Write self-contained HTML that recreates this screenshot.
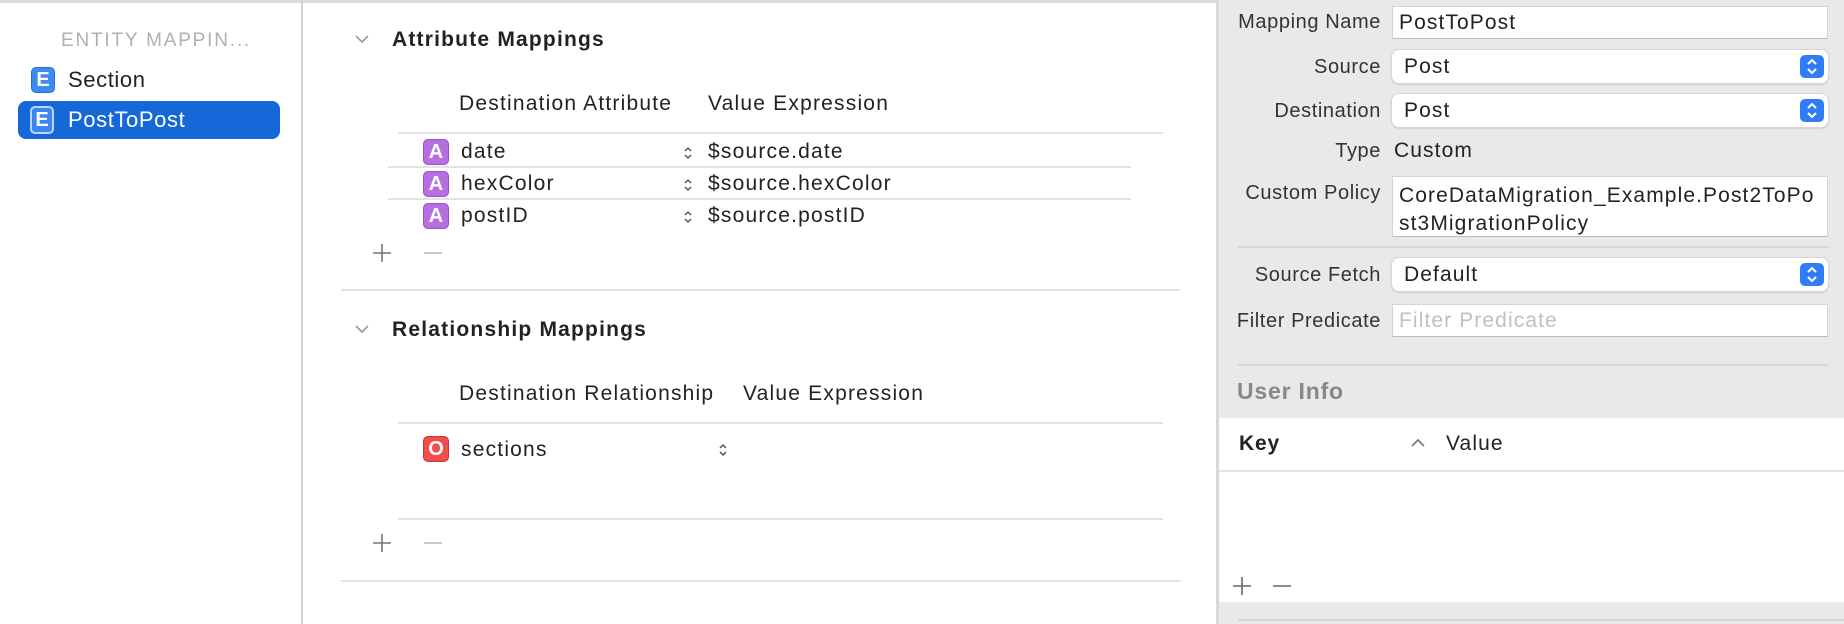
<!DOCTYPE html>
<html><head><meta charset="utf-8"><style>
*{margin:0;padding:0;box-sizing:border-box}
body{width:1844px;height:624px;overflow:hidden;background:#fff;font-family:"Liberation Sans",sans-serif;color:#222;position:relative}
.a{position:absolute;white-space:nowrap}
.t{font-size:21px;line-height:24px;letter-spacing:1.2px}
.hl{position:absolute;height:2px;background:#e3e3e3}
.ic{position:absolute;width:26px;height:26px;border-radius:5px;color:#fff;font-size:20px;font-weight:bold;text-align:center;line-height:24px}
.A{background:#b56fe0;border:1px solid #9a4fcc}
.st{position:absolute}
.lab{position:absolute;right:463px;font-size:20px;line-height:24px;color:#333;text-align:right;letter-spacing:.6px}
.fld{position:absolute;left:1392px;width:436px;background:#fff;border:1px solid #d4d4d4;border-bottom-color:#bbb;font-size:21px;line-height:24px;padding-left:6px;letter-spacing:1.1px}
.pop{position:absolute;left:1392px;width:436px;height:33px;background:#fff;border-radius:7px;box-shadow:0 0 0 1px #d6d6d6,0 1px 2px rgba(0,0,0,.25);font-size:21px;line-height:33px;padding-left:12px;letter-spacing:1.1px}
.pop b{position:absolute;right:4px;top:5px;width:24px;height:23px;background:#2f7cf6;border-radius:5px}
</style></head><body>
<div class="a" style="left:0;top:0;width:1844px;height:3px;background:#dcdcdc"></div>
<!-- sidebar -->
<div class="a" style="left:301px;top:0;width:2px;height:624px;background:#d2d2d2"></div>
<div class="a" style="left:61px;top:30px;font-size:19px;color:#b0b0b0;letter-spacing:1.8px">ENTITY MAPPIN...</div>
<div class="ic" style="left:31px;top:67px;width:24px;background:#3d8af0;border:1px solid #2a6fd0">E</div>
<div class="a t" style="left:68px;top:68px;font-size:22px;letter-spacing:.6px">Section</div>
<div class="a" style="left:18px;top:101px;width:262px;height:38px;background:#1668d9;border-radius:8px"></div>
<div class="ic" style="left:30px;top:106px;width:24px;height:28px;background:#3b86ee;border:2px solid #bcd6fb;line-height:24px">E</div>
<div class="a t" style="left:68px;top:108px;font-size:22px;letter-spacing:.6px;color:#fff">PostToPost</div>
<!-- middle -->
<svg class="a" style="left:354px;top:34px" width="16" height="10"><path d="M2 2l6 6 6-6" stroke="#999" stroke-width="1.6" fill="none"/></svg>
<div class="a t" style="left:392px;top:28px;font-weight:bold">Attribute Mappings</div>
<div class="a t" style="left:459px;top:92px">Destination Attribute</div>
<div class="a t" style="left:708px;top:92px">Value Expression</div>
<div class="hl" style="left:398px;top:132px;width:765px"></div>
<div class="hl" style="left:388px;top:166px;width:743px"></div>
<div class="hl" style="left:388px;top:198px;width:743px"></div>
<div class="ic A" style="left:423px;top:139px">A</div>
<div class="ic A" style="left:423px;top:171px">A</div>
<div class="ic A" style="left:423px;top:203px">A</div>
<div class="a t" style="left:461px;top:140px">date</div>
<div class="a t" style="left:461px;top:172px">hexColor</div>
<div class="a t" style="left:461px;top:204px">postID</div>
<svg class="st" style="left:683px;top:145px" width="10" height="16"><path d="M2 6l3-3 3 3M2 10l3 3 3-3" stroke="#555" stroke-width="1.5" fill="none"/></svg>
<svg class="st" style="left:683px;top:177px" width="10" height="16"><path d="M2 6l3-3 3 3M2 10l3 3 3-3" stroke="#555" stroke-width="1.5" fill="none"/></svg>
<svg class="st" style="left:683px;top:209px" width="10" height="16"><path d="M2 6l3-3 3 3M2 10l3 3 3-3" stroke="#555" stroke-width="1.5" fill="none"/></svg>
<div class="a t" style="left:708px;top:140px">$source.date</div>
<div class="a t" style="left:708px;top:172px">$source.hexColor</div>
<div class="a t" style="left:708px;top:204px">$source.postID</div>
<svg class="a" style="left:372px;top:243px" width="20" height="20"><path d="M10 1v18M1 10h18" stroke="#777" stroke-width="1.6"/></svg>
<svg class="a" style="left:423px;top:243px" width="20" height="20"><path d="M1 10h18" stroke="#bbb" stroke-width="1.6"/></svg>
<div class="hl" style="left:341px;top:289px;width:839px"></div>
<svg class="a" style="left:354px;top:324px" width="16" height="10"><path d="M2 2l6 6 6-6" stroke="#999" stroke-width="1.6" fill="none"/></svg>
<div class="a t" style="left:392px;top:318px;font-weight:bold">Relationship Mappings</div>
<div class="a t" style="left:459px;top:382px">Destination Relationship</div>
<div class="a t" style="left:743px;top:382px">Value Expression</div>
<div class="hl" style="left:398px;top:422px;width:765px"></div>
<div class="ic" style="left:423px;top:436px;background:#f04d4d;border:1px solid #d63232">O</div>
<div class="a t" style="left:461px;top:438px">sections</div>
<svg class="st" style="left:718px;top:442px" width="10" height="16"><path d="M2 6l3-3 3 3M2 10l3 3 3-3" stroke="#555" stroke-width="1.5" fill="none"/></svg>
<div class="hl" style="left:398px;top:518px;width:765px"></div>
<svg class="a" style="left:372px;top:533px" width="20" height="20"><path d="M10 1v18M1 10h18" stroke="#777" stroke-width="1.6"/></svg>
<svg class="a" style="left:423px;top:533px" width="20" height="20"><path d="M1 10h18" stroke="#bbb" stroke-width="1.6"/></svg>
<div class="hl" style="left:341px;top:580px;width:839px"></div>
<!-- right panel -->
<div class="a" style="left:1216px;top:0;width:3px;height:624px;background:#d8d8d8"></div>
<div class="a" style="left:1219px;top:0;width:625px;height:624px;background:#e9e9e9"></div>
<div class="lab" style="top:10px">Mapping Name</div>
<div class="fld" style="top:6px;height:33px;line-height:31px">PostToPost</div>
<div class="lab" style="top:55px">Source</div>
<div class="pop" style="top:50px">Post<b><svg width="24" height="23"><path d="M8 9l4-4 4 4M8 14l4 4 4-4" stroke="#fff" stroke-width="2" fill="none"/></svg></b></div>
<div class="lab" style="top:99px">Destination</div>
<div class="pop" style="top:94px">Post<b><svg width="24" height="23"><path d="M8 9l4-4 4 4M8 14l4 4 4-4" stroke="#fff" stroke-width="2" fill="none"/></svg></b></div>
<div class="lab" style="top:139px">Type</div>
<div class="a" style="left:1394px;top:139px;font-size:21px;line-height:24px;letter-spacing:1.1px">Custom</div>
<div class="lab" style="top:181px">Custom Policy</div>
<div class="fld" style="top:176px;height:61px;padding-top:5px;line-height:28px;white-space:normal;word-break:break-all;padding-right:4px">CoreDataMigration_Example.Post2ToPost3MigrationPolicy</div>
<div class="a" style="left:1238px;top:246px;width:590px;height:2px;background:#d6d6d6"></div>
<div class="lab" style="top:263px">Source Fetch</div>
<div class="pop" style="top:258px">Default<b><svg width="24" height="23"><path d="M8 9l4-4 4 4M8 14l4 4 4-4" stroke="#fff" stroke-width="2" fill="none"/></svg></b></div>
<div class="lab" style="top:309px">Filter Predicate</div>
<div class="fld" style="top:304px;height:33px;line-height:31px;color:#c0c0c0">Filter Predicate</div>
<div class="a" style="left:1238px;top:364px;width:590px;height:2px;background:#d6d6d6"></div>
<div class="a" style="left:1237px;top:378px;font-size:23px;font-weight:bold;color:#888;letter-spacing:.8px">User Info</div>
<div class="a" style="left:1219px;top:418px;width:625px;height:184px;background:#fff"></div>
<div class="a" style="left:1239px;top:432px;font-size:21px;line-height:24px;font-weight:bold;letter-spacing:.8px">Key</div>
<svg class="a" style="left:1410px;top:438px" width="16" height="10"><path d="M2 8l6-6 6 6" stroke="#777" stroke-width="1.6" fill="none"/></svg>
<div class="a" style="left:1446px;top:432px;font-size:21px;line-height:24px;letter-spacing:1.1px">Value</div>
<div class="a" style="left:1219px;top:470px;width:625px;height:2px;background:#e4e4e4"></div>
<svg class="a" style="left:1232px;top:576px" width="20" height="20"><path d="M10 1v18M1 10h18" stroke="#666" stroke-width="1.6"/></svg>
<svg class="a" style="left:1272px;top:576px" width="20" height="20"><path d="M1 10h18" stroke="#666" stroke-width="1.6"/></svg>
<div class="a" style="left:1238px;top:619px;width:606px;height:2px;background:#d6d6d6"></div>
</body></html>
